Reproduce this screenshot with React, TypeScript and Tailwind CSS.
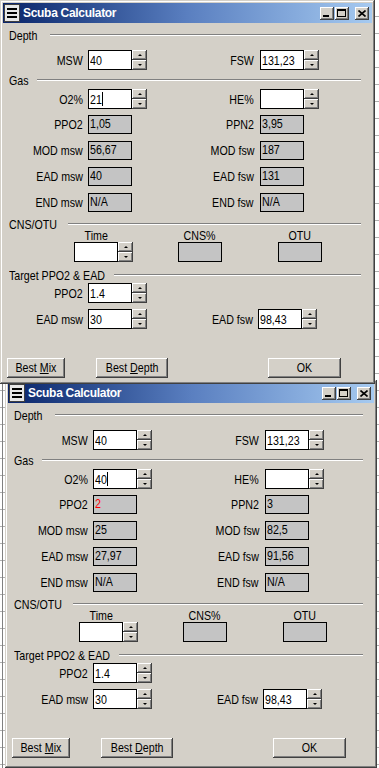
import React from "react";

const RAISED =
  "bg-[#d4d0c8] shadow-[inset_-1px_-1px_#404040,inset_1px_1px_#ffffff,inset_-2px_-2px_#808080,inset_2px_2px_#d4d0c8]";
const FONT = "font-['Liberation_Sans',Arial,sans-serif]";

type Data = {
  msw: string;
  fsw: string;
  o2: string;
  he: string;
  ppo2: string;
  ppo2Red?: boolean;
  ppn2: string;
  modm: string;
  modf: string;
  eadm: string;
  eadf: string;
  endm: string;
  endf: string;
  tppo2: string;
  teadm: string;
  teadf: string;
};

function T({ children, o = "l" }: { children: React.ReactNode; o?: "l" | "r" | "c" }) {
  const cls = o === "r" ? "origin-right" : o === "c" ? "origin-center" : "origin-left";
  return <span className={`inline-block whitespace-nowrap scale-x-[0.82] ${cls}`}>{children}</span>;
}

function Spin() {
  return (
    <div className="flex h-[20px] w-[15px] flex-col">
      <div className={`${RAISED} flex h-[10px] items-center justify-center`}>
        <div className="h-0 w-0 border-x-[2px] border-b-[2px] border-x-transparent border-b-black" />
      </div>
      <div className={`${RAISED} flex h-[10px] items-center justify-center`}>
        <div className="h-0 w-0 border-x-[2px] border-t-[2px] border-x-transparent border-t-black" />
      </div>
    </div>
  );
}

function Input({ value, caret }: { value: string; caret?: boolean }) {
  return (
    <div className="flex h-[20px] w-[44px] items-center overflow-hidden border border-black bg-white pl-[1px] leading-none text-black">
      {value && <T>{value}</T>}
      {caret && <span className="-ml-[2px] inline-block h-[14px] w-[1px] bg-black" />}
    </div>
  );
}

function SpinInput({ value, caret }: { value: string; caret?: boolean }) {
  return (
    <div className="flex">
      <Input value={value} caret={caret} />
      <Spin />
    </div>
  );
}

function Box({ value, red }: { value: string; red?: boolean }) {
  return (
    <div
      className={`h-[19px] w-[44px] overflow-hidden border border-black bg-[#c4c4c4] pl-[1px] leading-[15px] ${
        red ? "text-[#ff0000]" : "text-black"
      }`}
    >
      <T>{value}</T>
    </div>
  );
}

function Group({ label, w, cls }: { label: string; w: string; cls: string }) {
  return (
    <div className={`flex h-[12px] items-center pl-[6px] pr-[11px] ${cls}`}>
      <div className={`leading-none ${w}`}>
        <T>{label}</T>
      </div>
      <div className="h-[2px] flex-1 border-t border-b border-t-[#808080] border-b-white" />
    </div>
  );
}

function Row({
  cls,
  l,
  lv,
  r,
  rv,
}: {
  cls: string;
  l: string;
  lv: React.ReactNode;
  r: string;
  rv: React.ReactNode;
}) {
  return (
    <div className={`flex items-center ${cls}`}>
      <div className="flex w-[171px] items-center">
        <div className="w-[80px] text-right leading-none">
          <T o="r">{l}</T>
        </div>
        <div className="ml-[5px]">{lv}</div>
      </div>
      <div className="flex items-center">
        <div className="w-[80px] text-right leading-none">
          <T o="r">{r}</T>
        </div>
        <div className="ml-[6px]">{rv}</div>
      </div>
    </div>
  );
}

function CapButton({ kind, cls }: { kind: "min" | "max" | "close"; cls?: string }) {
  return (
    <div className={`${RAISED} relative h-[13px] w-[14px] ${cls ?? ""}`}>
      {kind === "min" && <div className="absolute bottom-[3px] left-[3px] h-[2px] w-[6px] bg-black" />}
      {kind === "max" && (
        <div className="absolute left-[2px] top-[2px] h-[8px] w-[9px] border border-t-2 border-black" />
      )}
      {kind === "close" && (
        <svg className="absolute left-[3px] top-[3px]" width="8" height="7" viewBox="0 0 8 7">
          <path d="M0.5 0.5 L7.5 6.5 M7.5 0.5 L0.5 6.5" stroke="#000" strokeWidth="1.6" />
        </svg>
      )}
    </div>
  );
}

function Window({ data, cls }: { data: Data; cls: string }) {
  return (
    <div
      className={`absolute flex flex-col bg-[#d4d0c8] p-[3px] shadow-[inset_-1px_-1px_#404040,inset_1px_1px_#d4d0c8,inset_-2px_-2px_#808080,inset_2px_2px_#ffffff] ${FONT} text-[13px] text-black ${cls}`}
    >
      {/* title bar */}
      <div className="flex h-[20px] shrink-0 items-center bg-linear-to-r from-[#0a246a] via-[#5a7fc0] to-[#a6caf0]">
        <div className="ml-[1px] flex h-[18px] w-[16px] flex-col items-center justify-center gap-[2px] border border-[#404040] bg-[#e8e8e8]">
          <div className="h-[2px] w-[10px] bg-black" />
          <div className="h-[2px] w-[10px] bg-black" />
          <div className="h-[2px] w-[10px] bg-black" />
        </div>
        <span className="ml-[3px] text-[12px] font-bold tracking-[-0.3px] text-white">Scuba Calculator</span>
        <div className="ml-auto mr-[3px] flex items-center">
          <CapButton kind="min" />
          <CapButton kind="max" cls="ml-[1px]" />
          <CapButton kind="close" cls="ml-[6px]" />
        </div>
      </div>

      {/* content */}
      <div className="flex flex-col">
        <Group label="Depth" w="w-[41px]" cls="mt-[6px]" />
        <Row
          cls="mt-[9px] h-[20px]"
          l="MSW"
          lv={<SpinInput value={data.msw} />}
          r="FSW"
          rv={<SpinInput value={data.fsw} />}
        />
        <Group label="Gas" w="w-[28px]" cls="mt-[4px]" />
        <Row
          cls="mt-[3px] h-[20px]"
          l="O2%"
          lv={<SpinInput value={data.o2} caret />}
          r="HE%"
          rv={<SpinInput value={data.he} />}
        />
        <Row
          cls="mt-[6px] h-[19px]"
          l="PPO2"
          lv={<Box value={data.ppo2} red={data.ppo2Red} />}
          r="PPN2"
          rv={<Box value={data.ppn2} />}
        />
        <Row
          cls="mt-[7px] h-[19px]"
          l="MOD msw"
          lv={<Box value={data.modm} />}
          r="MOD fsw"
          rv={<Box value={data.modf} />}
        />
        <Row
          cls="mt-[7px] h-[19px]"
          l="EAD msw"
          lv={<Box value={data.eadm} />}
          r="EAD fsw"
          rv={<Box value={data.eadf} />}
        />
        <Row
          cls="mt-[7px] h-[19px]"
          l="END msw"
          lv={<Box value={data.endm} />}
          r="END fsw"
          rv={<Box value={data.endf} />}
        />
        <Group label="CNS/OTU" w="w-[59px]" cls="mt-[6px]" />
        <div className="flex items-end">
          <div className="ml-[71px] flex flex-col items-center">
            <div className="h-[12px] leading-[12px]">
              <T o="c">Time</T>
            </div>
            <Input value="" />
          </div>
          <Spin />
          <div className="ml-[45px] flex flex-col items-center">
            <div className="h-[12px] leading-[12px]">
              <T o="c">CNS%</T>
            </div>
            <div className="h-[20px] w-[44px] border border-black bg-[#c4c4c4]" />
          </div>
          <div className="ml-[56px] flex flex-col items-center">
            <div className="h-[12px] leading-[12px]">
              <T o="c">OTU</T>
            </div>
            <div className="h-[20px] w-[44px] border border-black bg-[#c4c4c4]" />
          </div>
        </div>
        <Group label="Target PPO2 & EAD" w="w-[105px]" cls="mt-[7px]" />
        <div className="mt-[2px] flex h-[20px] items-center">
          <div className="w-[80px] text-right leading-none">
            <T o="r">PPO2</T>
          </div>
          <div className="ml-[5px]">
            <SpinInput value={data.tppo2} />
          </div>
        </div>
        <div className="mt-[6px] flex h-[20px] items-center">
          <div className="flex w-[171px] items-center">
            <div className="w-[80px] text-right leading-none">
              <T o="r">EAD msw</T>
            </div>
            <div className="ml-[5px]">
              <SpinInput value={data.teadm} />
            </div>
          </div>
          <div className="flex items-center">
            <div className="w-[79px] text-right leading-none">
              <T o="r">EAD fsw</T>
            </div>
            <div className="ml-[5px]">
              <SpinInput value={data.teadf} />
            </div>
          </div>
        </div>
        <div className="mt-[29px] flex h-[20px] items-center">
          <div className={`${RAISED} ml-[4px] flex h-[20px] w-[58px] items-center justify-center`}>
            <T o="c">
              Best <span className="underline underline-offset-[1px]">M</span>ix
            </T>
          </div>
          <div className={`${RAISED} ml-[31px] flex h-[20px] w-[72px] items-center justify-center`}>
            <T o="c">
              Best <span className="underline underline-offset-[1px]">D</span>epth
            </T>
          </div>
          <div className={`${RAISED} ml-[100px] flex h-[20px] w-[73px] items-center justify-center`}>
            <T o="c">OK</T>
          </div>
        </div>
      </div>
    </div>
  );
}

const w1: Data = {
  msw: "40",
  fsw: "131,23",
  o2: "21",
  he: "",
  ppo2: "1,05",
  ppn2: "3,95",
  modm: "56,67",
  modf: "187",
  eadm: "40",
  eadf: "131",
  endm: "N/A",
  endf: "N/A",
  tppo2: "1.4",
  teadm: "30",
  teadf: "98,43",
};

const w2: Data = {
  msw: "40",
  fsw: "131,23",
  o2: "40",
  he: "",
  ppo2: "2",
  ppo2Red: true,
  ppn2: "3",
  modm: "25",
  modf: "82,5",
  eadm: "27,97",
  eadf: "91,56",
  endm: "N/A",
  endf: "N/A",
  tppo2: "1.4",
  teadm: "30",
  teadf: "98,43",
};

export default function App() {
  return (
    <div className="relative h-[768px] w-[379px] overflow-hidden bg-white bg-[repeating-linear-gradient(to_bottom,#ffffff_0px,#ffffff_16px,#b0b0b0_16px,#b0b0b0_17px)]">
      <div className="absolute left-[2px] top-0 h-full w-[1px] bg-[#808080]" />
      <Window data={w1} cls="left-0 top-0 z-20 h-[384px] w-[375px]" />
      <Window data={w2} cls="left-[5px] top-[380px] z-10 h-[388px] w-[372px]" />
    </div>
  );
}
